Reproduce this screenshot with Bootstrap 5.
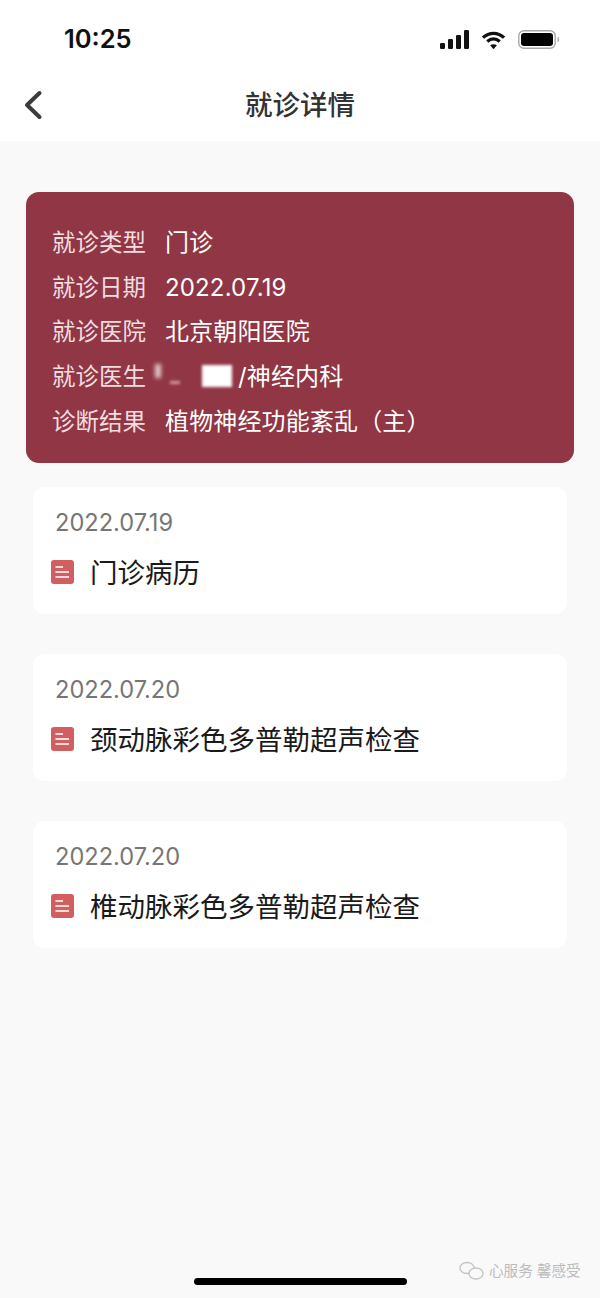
<!DOCTYPE html>
<html lang="zh">

<head>
    <meta charset="UTF-8">
    <title>就诊详情</title>
    <link href="https://cdn.jsdelivr.net/npm/bootstrap@5.3.0/dist/css/bootstrap.min.css" rel="stylesheet">
    <style>
        body {
            background-color: #f9f9f9;
            font-family: "Inter", "Noto Sans CJK SC", sans-serif;
            height: 1298px;
            overflow: hidden;
        }

        .page-top {
            background: #fff;
            height: 141px;
        }

        .status-bar {
            height: 70px;
            padding: 22px 40px 0 64px;
        }

        .status-time {
            font-size: 25.5px;
            font-weight: 600;
            line-height: 34px;
            color: #111;
        }

        .status-icons {
            gap: 12px;
            padding-top: 8px;
        }

        .top-title {
            height: 71px;
            padding: 0 24px;
            position: relative;
        }

        .top-title h1 {
            font-size: 27.5px;
            font-weight: 500;
            color: #333;
            margin: 0 auto;
            line-height: 71px;
        }

        .back-icon {
            position: absolute;
            left: 24px;
            top: 20px;
        }

        .visit-box {
            background: #903644;
            border-radius: 13px;
            margin: 51px 26px 24px;
            height: 271px;
            padding: 29px 26px 0;
            color: #fff;
            font-size: 24px;
        }

        .visit-row {
            height: 44.7px;
            line-height: 44px;
            white-space: nowrap;
        }

        .visit-label {
            width: 113px;
            color: #f2dde0;
            font-size: 23.5px;
            font-weight: 400;
            flex-shrink: 0;
        }

        .visit-value {
            font-weight: 400;
            letter-spacing: 0.15px;
        }

        .hidden-name {
            display: inline-block;
            width: 73px;
            height: 24px;
            position: relative;
            vertical-align: -3px;
        }

        .smudge-a {
            position: absolute;
            left: -10px;
            top: 0;
            width: 6px;
            height: 14px;
            background: #e7c9cd;
            filter: blur(2px);
        }

        .smudge-c {
            position: absolute;
            left: 5px;
            top: 17px;
            width: 10px;
            height: 3px;
            background: #d99aa3;
            filter: blur(1.5px);
        }

        .smudge-b {
            position: absolute;
            left: 37px;
            top: 1px;
            width: 30px;
            height: 22px;
            background: #fff;
            filter: blur(1.5px);
        }

        .report-box {
            background: #fff;
            border-radius: 12px;
            margin: 0 33px 40px;
            height: 127px;
            padding: 20px 18px 0 18px;
        }

        .report-date {
            color: #767676;
            font-size: 23.6px;
            line-height: 32px;
            padding-left: 4px;
        }

        .report-name {
            color: #1a1a1a;
            font-size: 27.5px;
            line-height: 40px;
            margin-top: 14px;
        }

        .report-icon {
            flex-shrink: 0;
            margin-top: -3px;
        }

        .home-bar {
            position: absolute;
            left: 194px;
            top: 1278px;
            width: 213px;
            height: 7px;
            border-radius: 4px;
            background: #000;
        }

        .mark-wrap {
            position: absolute;
            left: 459px;
            top: 1260px;
            color: #bcbcbc;
            font-size: 14.6px;
            line-height: 22px;
        }
    </style>
</head>

<body>
    <div class="page-top">
        <div class="status-bar d-flex justify-content-between">
            <div class="status-time">10:25</div>
            <div class="status-icons d-flex align-items-start">
                <svg width="29" height="20" viewBox="0 0 29 20" fill="#111">
                    <rect x="0" y="13" width="5" height="6" rx="1.2" />
                    <rect x="8" y="9" width="5" height="10" rx="1.2" />
                    <rect x="16" y="5" width="5" height="14" rx="1.2" />
                    <rect x="24" y="0" width="5" height="19" rx="1.2" />
                </svg>
                <svg width="25" height="20" viewBox="0 0 26 20" fill="none" stroke="#111" stroke-width="3.4">
                    <path d="M2 7.500C8.500 1.500 17.500 1.500 24 7.500" />
                    <path d="M6.500 11.500C10.500 8 15.500 8 19.500 11.500" />
                    <path d="M13 19.500L9.500 15.500C11.500 14 14.500 14 16.500 15.500Z" fill="#111" stroke="none" />
                </svg>
                <svg width="42" height="20" viewBox="0 0 42 20">
                    <rect x="0.800" y="0.800" width="36.400" height="17.400" rx="5" fill="none" stroke="#a8a8a8" stroke-width="1.400" />
                    <rect x="3" y="3" width="32" height="13" rx="3.200" fill="#000" />
                    <rect x="39.500" y="7" width="1.500" height="5" rx="0.700" fill="#b0b0b0" />
                </svg>
            </div>
        </div>
        <div class="top-title d-flex">
            <svg class="back-icon" width="22" height="32" viewBox="0 0 22 32" fill="none" stroke="#3c3c3c" stroke-width="4" stroke-linecap="round" stroke-linejoin="round">
                <path d="M15.500 3L3 15L15.500 27" />
            </svg>
            <h1>就诊详情</h1>
        </div>
    </div>

    <div class="visit-box">
        <div class="visit-row d-flex"><span class="visit-label">就诊类型</span><span class="visit-value">门诊</span></div>
        <div class="visit-row d-flex"><span class="visit-label">就诊日期</span><span class="visit-value">2022.07.19</span></div>
        <div class="visit-row d-flex"><span class="visit-label">就诊医院</span><span class="visit-value">北京朝阳医院</span></div>
        <div class="visit-row d-flex"><span class="visit-label">就诊医生</span><span class="visit-value"><span class="hidden-name"><span class="smudge-a"></span><span class="smudge-c"></span><span class="smudge-b"></span></span>/神经内科</span></div>
        <div class="visit-row d-flex"><span class="visit-label">诊断结果</span><span class="visit-value">植物神经功能紊乱（主）</span></div>
    </div>

    <div id="report-list"></div>

    <div class="home-bar"></div>
    <div class="mark-wrap d-flex align-items-center gap-1">
        <svg width="26" height="20" viewBox="0 0 26 20" fill="none" stroke="#c4c4c4" stroke-width="1.300">
            <ellipse cx="8" cy="7" rx="7" ry="5.500" />
            <ellipse cx="17" cy="12.500" rx="7" ry="5.500" fill="#f9f9f9" />
        </svg>
        <span>心服务 馨感受</span>
    </div>

    <script>
        const reports = [
            { date: "2022.07.19", name: "门诊病历" },
            { date: "2022.07.20", name: "颈动脉彩色多普勒超声检查" },
            { date: "2022.07.20", name: "椎动脉彩色多普勒超声检查" },
        ];

        const list = document.getElementById("report-list");
        reports.forEach(r => {
            list.innerHTML += `
        <div class="report-box">
          <div class="report-date">${r.date}</div>
          <div class="report-name d-flex align-items-center gap-3">
            <svg class="report-icon" width="23" height="24" viewBox="0 0 23 24">
              <rect width="23" height="24" rx="3" fill="#d25f5f" />
              <path d="M4.500 7H12M4.500 12H18M4.500 17H18" stroke="#f8dcdc" stroke-width="1.800" fill="none" />
            </svg>
            <span>${r.name}</span>
          </div>
        </div>`;
        });
    </script>
    <script src="https://cdn.jsdelivr.net/npm/bootstrap@5.3.0/dist/js/bootstrap.bundle.min.js"></script>
</body>

</html>
